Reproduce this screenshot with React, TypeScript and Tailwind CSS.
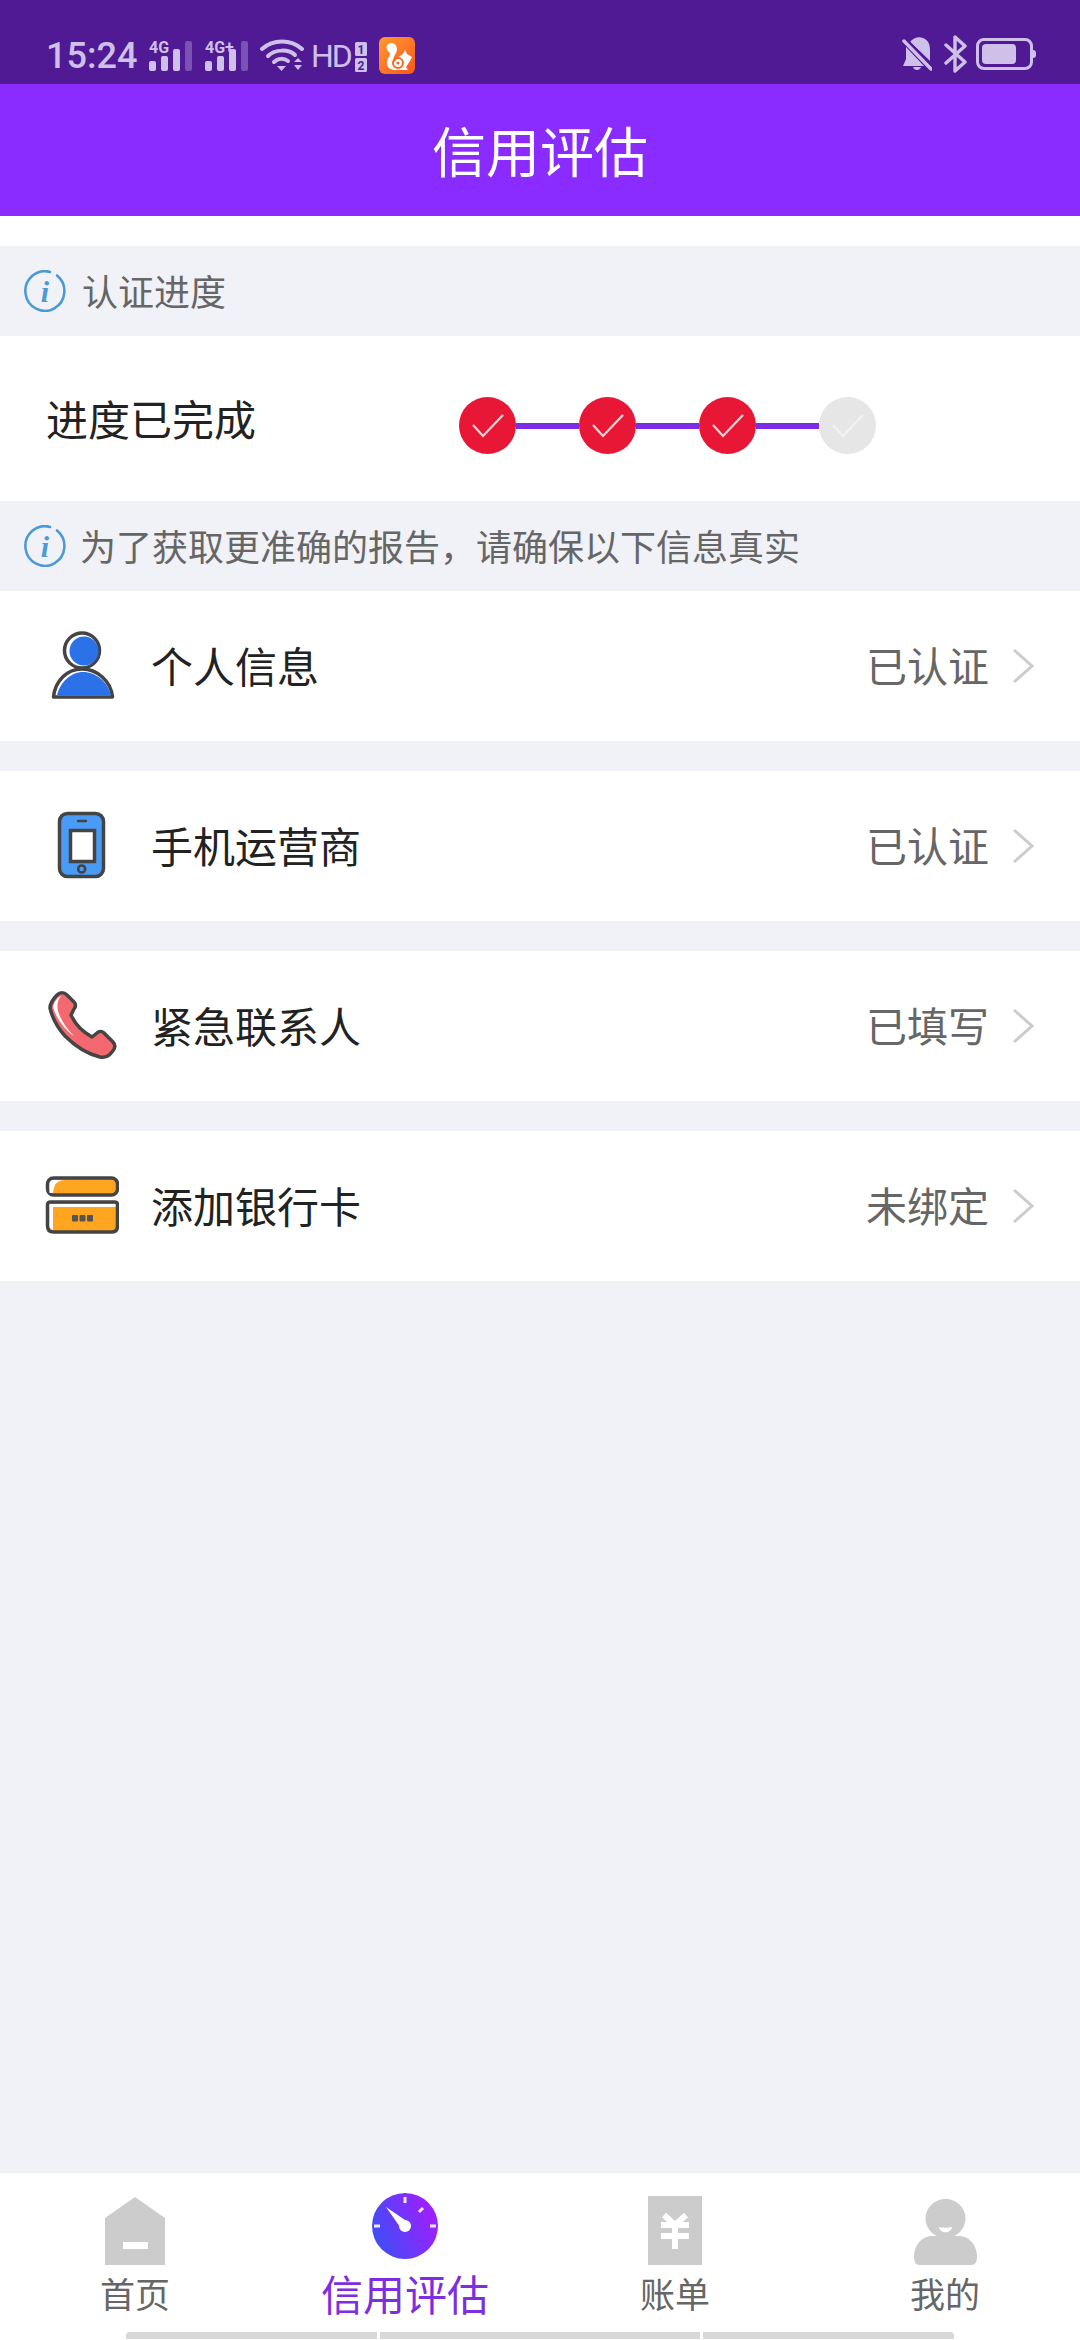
import React from 'react';

const steps = [true, true, true, false];

const InfoIcon: React.FC = () => (
  <svg width="42" height="42" viewBox="0 0 42 42" className="shrink-0">
    <path d="M26 1.900 A19.500 19.800 0 1 0 33 5.500" fill="none" stroke="#4b9ad8" strokeWidth="2.600" strokeLinecap="round" />
    <text x="21" y="32" textAnchor="middle" fontFamily="'Liberation Serif', serif" fontStyle="italic" fontWeight="700" fontSize="30" fill="#4b9ad8">i</text>
  </svg>
);

const PersonIcon = () => (
  <svg width="74" height="74" viewBox="0 0 74 74">
    <circle cx="37" cy="21.500" r="17.500" fill="#fff" stroke="#444" strokeWidth="3.500" />
    <circle cx="39" cy="22" r="14.500" fill="#2b72e8" />
    <path d="M8.500 68 C10 52 22 40 37 40 C52 40 66 52 67.500 68 Z" fill="#fff" stroke="#444" strokeWidth="3.500" strokeLinejoin="round" />
    <path d="M12 66.500 C15 53 26 43 38 43 C51 43 63 53 66 66.500 Z" fill="#2b72e8" />
  </svg>
);

const PhoneIcon = () => (
  <svg width="74" height="74" viewBox="0 0 74 74">
    <rect x="14.500" y="4.500" width="44" height="63" rx="8" fill="#4a9bf5" stroke="#444" strokeWidth="3.500" />
    <rect x="25.500" y="21.500" width="24" height="31" fill="#fff" stroke="#444" strokeWidth="3.500" />
    <circle cx="36.700" cy="60" r="3.500" fill="#4a9bf5" stroke="#444" strokeWidth="2.600" />
    <path d="M33 12 H41" stroke="#444" strokeWidth="2.400" strokeLinecap="round" />
  </svg>
);

const CallIcon = () => (
  <svg width="74" height="74" viewBox="0 0 74 74">
    <path
      d="M12 6 C15 3 19 3 22 6 L29 13 C31 15 31 18 29 20 L26 26 C30 35 38 43 47 48 L52 44 C54 42 57 42 59 44 L68 53 C71 56 70 60 67 63 C64 67 60 69 55 68 C42 65 29 56 20 47 C12 38 7 28 5 19 C5 14 8 10 12 6 Z"
      fill="#f4696f"
      stroke="#444"
      strokeWidth="3.500"
      strokeLinejoin="round"
    />
    <path d="M8 18 C9 13 12 9 16 7 C12 12 12 17 13 22 C16 32 22 40 29 47 C20 41 11 29 8 18 Z" fill="#fff" />
  </svg>
);

const CardIcon = () => (
  <svg width="74" height="74" viewBox="0 0 74 74">
    <rect x="2.500" y="9" width="70" height="17" rx="6" fill="#ffa51f" stroke="#444" strokeWidth="3.500" />
    <path d="M4.500 24 V15 C4.500 12 6 11 9 11 H20 C12 11.500 9 15 8 24 Z" fill="#fff" />
    <path d="M2.500 36 C2.500 34 3.500 33 5.500 33 H69.500 C71.500 33 72.500 34 72.500 36 V57 C72.500 61 70.500 63 66.500 63 H8.500 C4.500 63 2.500 61 2.500 57 Z" fill="#ffa51f" stroke="#444" strokeWidth="3.500" />
    <path d="M4.500 35 H70.500 V38 H8 V61 C5 60 4.500 59 4.500 56 Z" fill="#fff" />
    <rect x="27" y="46" width="6" height="6.500" rx="1" fill="#555" />
    <rect x="34.500" y="46" width="6" height="6.500" rx="1" fill="#555" />
    <rect x="42" y="46" width="6" height="6.500" rx="1" fill="#555" />
  </svg>
);

const rows = [
  { icon: <PersonIcon />, label: '个人信息', status: '已认证' },
  { icon: <PhoneIcon />, label: '手机运营商', status: '已认证' },
  { icon: <CallIcon />, label: '紧急联系人', status: '已填写' },
  { icon: <CardIcon />, label: '添加银行卡', status: '未绑定' },
];

const Signal: React.FC<{ label: string; lit: number }> = ({ label, lit }) => (
  <svg width="44" height="34" viewBox="0 0 44 34" className="shrink-0">
    <text x="0" y="14" fontFamily="Roboto, sans-serif" fontWeight="700" fontSize="16" fill="#cfc0ea">{label}</text>
    {[0, 1, 2, 3].map(i => {
      const heights = [10, 15, 22, 30];
      const h = heights[i];
      // the tall bars sit beside the label, the short ones under it
      return <rect key={i} x={i * 12} y={32 - h} width="7" height={h} rx="2" fill={i < lit ? '#cfc0ea' : '#7a52b4'} />;
    })}
  </svg>
);

const StatusBar = () => (
  <div className="h-[84px] bg-[#4f1a94] flex items-start justify-between pt-[37px] pl-[46px] pr-[44px] shrink-0">
    <div className="flex items-center gap-[12px] text-[#cfc0ea] font-['Roboto',sans-serif]">
      <span className="text-[36px] leading-[36px] font-medium w-[91px]">15:24</span>
      <Signal label="4G" lit={3} />
      <Signal label="4G+" lit={3} />
      <svg width="44" height="34" viewBox="0 0 44 34" className="shrink-0 -ml-[1px]">
        <path d="M2 10 C13 0 31 0 42 10" fill="none" stroke="#cfc0ea" strokeWidth="4" strokeLinecap="round" />
        <path d="M8 17 C15 10 29 10 35 16" fill="none" stroke="#cfc0ea" strokeWidth="4" strokeLinecap="round" />
        <path d="M14 23 C18 19 24 19 28 22" fill="none" stroke="#cfc0ea" strokeWidth="4" strokeLinecap="round" />
        <path d="M17 27 H26 L21.500 32 Z" fill="#cfc0ea" />
        <path d="M34 23 L38 19 L42 23 Z M34 26 H42 L38 31 Z" fill="#cfc0ea" />
      </svg>
      <div className="flex items-center gap-[3px] -ml-[5px]">
        <span className="text-[32px] leading-[34px] w-[40px] tracking-[-2px]">HD</span>
        <svg width="14" height="34" viewBox="0 0 14 34">
          <rect x="1" y="3" width="12" height="14" rx="1.500" fill="#cfc0ea" />
          <rect x="1" y="19" width="12" height="14" rx="1.500" fill="#cfc0ea" />
          <text x="7" y="14.500" textAnchor="middle" fontFamily="Roboto, sans-serif" fontWeight="700" fontSize="12" fill="#4f1a94">1</text>
          <text x="7" y="30.500" textAnchor="middle" fontFamily="Roboto, sans-serif" fontWeight="700" fontSize="12" fill="#4f1a94">2</text>
        </svg>
      </div>
      <svg width="36" height="37" viewBox="0 0 36 37" className="shrink-0 -ml-[1px]">
        <defs>
          <linearGradient id="uc" x1="0" y1="0" x2="1" y2="1">
            <stop offset="0" stopColor="#ff9a2e" />
            <stop offset="1" stopColor="#f9581f" />
          </linearGradient>
        </defs>
        <rect width="36" height="37" rx="6" fill="url(#uc)" />
        <path d="M13 6 C7 6 6 12 10 15 C13 18 8 20 8 26 C8 31 12 33 17 33 H29 L27 30 L31 24 L33 20 L28 17 L26 13 L24 17 C20 19 17 22 16 25 C13 23 15 19 17 16 C19 12 18 7 13 6 Z" fill="#fff" />
        <circle cx="19" cy="26" r="5" fill="none" stroke="#f9681f" strokeWidth="2" />
        <circle cx="19" cy="26" r="1.600" fill="#f9681f" />
      </svg>
    </div>
    <div className="flex items-center gap-[12px] -mt-[2px]">
      <svg width="30" height="36" viewBox="0 0 30 36" className="shrink-0">
        <path d="M8 6 C11 2 17 0 21 2 C26 4 28 8 28 14 V25 Z" fill="#cfc0ea" />
        <path d="M4 11 V23 L1 30 H22 Z" fill="#cfc0ea" />
        <path d="M11 31 H19 C18 35 12 35 11 31 Z" fill="#cfc0ea" />
        <path d="M2 5 L29 33" stroke="#cfc0ea" strokeWidth="3.500" strokeLinecap="round" />
        <path d="M5 4 L31 30" stroke="#4f1a94" strokeWidth="2" />
      </svg>
      <svg width="24" height="38" viewBox="0 0 24 38" className="shrink-0">
        <path d="M2 10 L21 27 L11 36 V2 L21 11 L2 28" fill="none" stroke="#cfc0ea" strokeWidth="3.400" strokeLinecap="round" strokeLinejoin="round" />
      </svg>
      <div className="flex items-center ml-[-4px]">
        <div className="w-[57px] h-[32px] rounded-[8px] border-[3px] border-[#cfc0ea] p-[3px] flex">
          <div className="w-[34px] h-full rounded-[4px] bg-[#cfc0ea]" />
        </div>
        <div className="w-[3px] h-[8px] rounded-r-full bg-[#cfc0ea]" />
      </div>
    </div>
  </div>
);

const SectionTip: React.FC<{ text: string; gap: string }> = ({ text, gap }) => (
  <div className={`h-[90px] flex items-center pl-[24px] text-[#666] text-[36px] ${gap}`}>
    <InfoIcon />
    <span className="-mt-[2px]">{text}</span>
  </div>
);

const Stepper = () => (
  <div className="flex items-center mt-[14px] mr-[204px]">
    {steps.map((done, i) => (
      <React.Fragment key={i}>
        {i > 0 && <div className="w-[63px] h-[6px] bg-[#7e2be8]" />}
        <div className={`w-[57px] h-[57px] rounded-full flex items-center justify-center ${done ? 'bg-[#e81736]' : 'bg-[#e6e6e6]'}`}>
          <svg width="34" height="26" viewBox="0 0 34 26">
            <path d="M2 12 L12 23 L32 2" fill="none" stroke={done ? '#ffd5da' : '#f3f3f3'} strokeWidth="2.200" />
          </svg>
        </div>
      </React.Fragment>
    ))}
  </div>
);

const NavItem: React.FC<{ label: string; active?: boolean; icon: React.ReactNode }> = ({ label, active, icon }) => (
  <div className="flex flex-col items-center">
    <div className="h-[72px] flex items-end justify-center">{icon}</div>
    <span className={active ? '-mt-[3px] text-[42px] leading-[62px] text-[#7d2ee0]' : '-mt-[3px] text-[35px] leading-[62px] text-[#666]'}>{label}</span>
  </div>
);

const App: React.FC = () => {
  return (
    <div className="w-[1080px] h-[2340px] flex flex-col bg-[#f0f2f7] font-['Noto_Sans_CJK_SC','Noto_Sans',sans-serif] overflow-hidden">
      <StatusBar />
      <div className="h-[132px] shrink-0 bg-[#8a2bff] flex items-center justify-center text-white text-[54px] pb-[2px]">信用评估</div>
      <div className="h-[30px] shrink-0 bg-white" />

      <SectionTip text="认证进度" gap="gap-[16px]" />
      <div className="h-[165px] bg-white flex items-center justify-between pl-[46px]">
        <span className="text-[42px] text-[#222] -mt-[2px]">进度已完成</span>
        <Stepper />
      </div>
      <SectionTip text="为了获取更准确的报告，请确保以下信息真实" gap="gap-[14px]" />

      <div className="flex flex-col gap-[30px]">
        {rows.map(row => (
          <div key={row.label} className="h-[150px] bg-white flex items-center pl-[45px] pr-[46px]">
            <div className="w-[74px] h-[74px] shrink-0">{row.icon}</div>
            <span className="ml-[32px] text-[42px] text-[#222] -mt-[3px]">{row.label}</span>
            <span className="ml-auto text-[41px] text-[#666] -mt-[3px]">{row.status}</span>
            <svg width="22" height="36" viewBox="0 0 22 36" className="ml-[23px] shrink-0">
              <path d="M2 2 L20 18 L2 34" fill="none" stroke="#ccc" strokeWidth="3" />
            </svg>
          </div>
        ))}
      </div>

      <div className="flex-1" />

      <nav className="h-[168px] shrink-0 bg-white border-t border-[#eceef2] flex flex-col">
        <div className="grid grid-cols-4 pt-[20px]">
          <NavItem
            label="首页"
            icon={
              <svg width="60" height="68" viewBox="0 0 60 68">
                <path d="M30 0 L60 21 V68 H0 V21 Z" fill="#ccc" />
                <rect x="18" y="45" width="25" height="7" fill="#fff" />
              </svg>
            }
          />
          <NavItem
            active
            label="信用评估"
            icon={
              <svg width="66" height="72" viewBox="0 0 66 72" className="self-start">
                <defs>
                  <linearGradient id="gauge" x1="0" y1="0.700" x2="1" y2="0.300">
                    <stop offset="0" stopColor="#3b50f5" />
                    <stop offset="1" stopColor="#a51cff" />
                  </linearGradient>
                </defs>
                <circle cx="33" cy="33" r="33" fill="url(#gauge)" />
                <path d="M33 27 L39 33 L33 39 L28 34 L14 14 Z" fill="#fff" />
                <circle cx="33" cy="33" r="6" fill="#fff" />
                <path d="M33 4 V10 M51 15 L47 19 M58 33 H64 M2 33 H8" stroke="#f2e6ff" strokeWidth="3" />
              </svg>
            }
          />
          <NavItem
            label="账单"
            icon={
              <svg width="54" height="69" viewBox="0 0 54 69">
                <rect width="54" height="69" fill="#ccc" />
                <path d="M16 19 L27 29 L38 19 M27 29 V53 M13 29 H41 M13 40 H41" fill="none" stroke="#fff" strokeWidth="6" />
              </svg>
            }
          />
          <NavItem
            label="我的"
            icon={
              <svg width="63" height="66" viewBox="0 0 63 66">
                <ellipse cx="31.500" cy="19.500" rx="20" ry="19.500" fill="#ccc" />
                <path d="M0 58 C0 46 8 37 18 37 H45 C55 37 63 46 63 58 C63 63 61 66 57 66 H6 C2 66 0 63 0 58 Z" fill="#ccc" />
                <path d="M25 28 C29 29 34 29 38 28 C37 35 26 35 25 28 Z" fill="#fff" />
              </svg>
            }
          />
        </div>
        <div className="flex justify-center gap-[3px] mt-[8px]">
          <div className="w-[251px] h-[7px] rounded-tl-[4px] bg-[#d8d8d8]" />
          <div className="w-[320px] h-[7px] bg-[#d8d8d8]" />
          <div className="w-[251px] h-[7px] rounded-tr-[4px] bg-[#d8d8d8]" />
        </div>
      </nav>
    </div>
  );
};

export default App;
